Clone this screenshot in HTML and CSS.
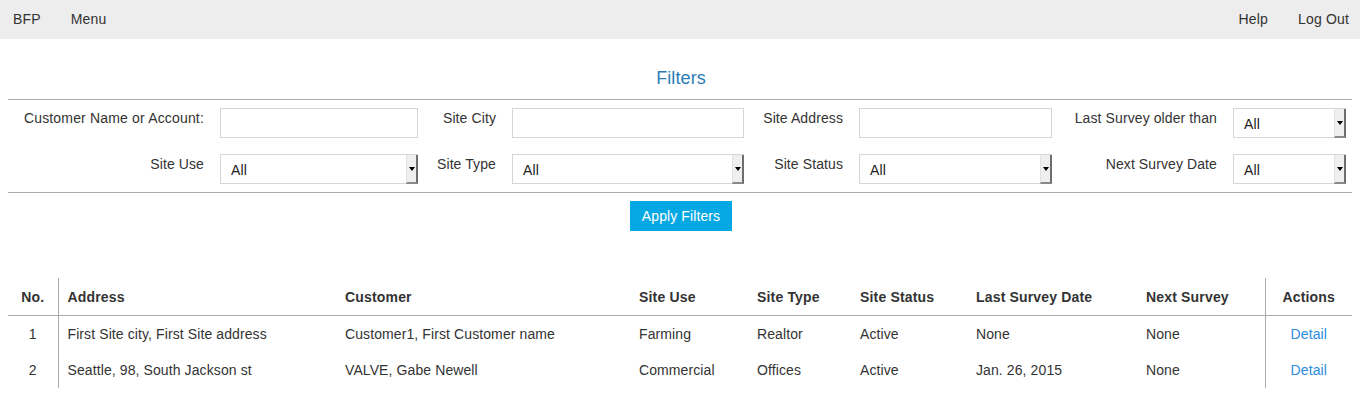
FILE: index.html
```html
<!DOCTYPE html>
<html>
<head>
<meta charset="utf-8">
<title>BFP</title>
<link rel="stylesheet" href="styles.css">
</head>
<body>
<nav class="navbar">
  <div class="nav-group">
    <a class="nav-link" href="#">BFP</a>
    <a class="nav-link" href="#">Menu</a>
  </div>
  <div class="nav-group">
    <a class="nav-link" href="#">Help</a>
    <a class="nav-link" href="#">Log Out</a>
  </div>
</nav>
<main class="content">
  <h2 class="filters-title">Filters</h2>
  <form class="filters">
    <label class="f-label">Customer Name or Account:</label>
    <input class="f-input" type="text">
    <label class="f-label">Site City</label>
    <input class="f-input" type="text">
    <label class="f-label">Site Address</label>
    <input class="f-input" type="text">
    <label class="f-label">Last Survey older than</label>
    <div class="f-select"><select><option>All</option></select><span class="arrow"></span></div>

    <label class="f-label">Site Use</label>
    <div class="f-select"><select><option>All</option></select><span class="arrow"></span></div>
    <label class="f-label">Site Type</label>
    <div class="f-select"><select><option>All</option></select><span class="arrow"></span></div>
    <label class="f-label">Site Status</label>
    <div class="f-select"><select><option>All</option></select><span class="arrow"></span></div>
    <label class="f-label">Next Survey Date</label>
    <div class="f-select"><select><option>All</option></select><span class="arrow"></span></div>
  </form>
  <div class="apply-row"><button class="apply-btn" type="button">Apply Filters</button></div>

  <table class="sites">
    <colgroup>
      <col class="c-no"><col class="c-addr"><col class="c-cust"><col class="c-use"><col class="c-type"><col class="c-status"><col class="c-last"><col class="c-next"><col class="c-act">
    </colgroup>
    <thead>
      <tr>
        <th class="no">No.</th>
        <th>Address</th>
        <th>Customer</th>
        <th>Site Use</th>
        <th>Site Type</th>
        <th>Site Status</th>
        <th>Last Survey Date</th>
        <th>Next Survey</th>
        <th class="act">Actions</th>
      </tr>
    </thead>
    <tbody>
      <tr>
        <td class="no">1</td>
        <td>First Site city, First Site address</td>
        <td>Customer1, First Customer name</td>
        <td>Farming</td>
        <td>Realtor</td>
        <td>Active</td>
        <td>None</td>
        <td>None</td>
        <td class="act"><a href="#">Detail</a></td>
      </tr>
      <tr>
        <td class="no">2</td>
        <td>Seattle, 98, South Jackson st</td>
        <td>VALVE, Gabe Newell</td>
        <td>Commercial</td>
        <td>Offices</td>
        <td>Active</td>
        <td>Jan. 26, 2015</td>
        <td>None</td>
        <td class="act"><a href="#">Detail</a></td>
      </tr>
    </tbody>
  </table>
</main>
</body>
</html>
```

FILE: styles.css
```css
* { box-sizing: border-box; }

body {
  margin: 0;
  font-family: "Liberation Sans", Arial, sans-serif;
  font-size: 14px;
  line-height: 20px;
  letter-spacing: 0.1px;
  color: #333;
  background: #fff;
}

.navbar {
  height: 39px;
  background: #ededed;
  display: flex;
  justify-content: space-between;
  align-items: center;
  padding: 0 11px 2px 13px;
}

.nav-group {
  display: flex;
  gap: 30px;
}

.nav-link {
  color: #333;
  text-decoration: none;
  font-size: 14px;
  line-height: 18px;
  letter-spacing: 0.17px;
}

.content {
  padding: 0 8px;
}

.filters-title {
  margin: 29px 0 11px;
  font-size: 18px;
  line-height: 20px;
  font-weight: normal;
  text-align: center;
  color: #2b7cb5;
  padding-left: 2px;
}

.filters {
  border-top: 1px solid #aaa;
  border-bottom: 1px solid #aaa;
  padding: 8px 0 8px;
  display: grid;
  grid-template-columns: 212px 198px 94px 232px 115px 193px 181px 113px;
  row-gap: 16px;
}

.f-label {
  text-align: right;
  padding-right: 16px;
  line-height: 20px;
}

.f-label:first-child {
  letter-spacing: 0.17px;
}

.f-input {
  height: 30px;
  border: 1px solid #d6d6d6;
  background: #fff;
  font: inherit;
  padding: 0 10px;
}

.f-select {
  position: relative;
  height: 30px;
}

.f-select select {
  appearance: none;
  -webkit-appearance: none;
  width: 100%;
  height: 30px;
  border: 1px solid #d6d6d6;
  border-radius: 0;
  background: #fff;
  font: inherit;
  letter-spacing: inherit;
  color: #222;
  padding: 1px 10px 0;
}

.f-select .arrow {
  position: absolute;
  top: 1px;
  right: 0;
  bottom: 0;
  width: 12px;
  background: #efefef;
  border-left: 1px solid #e2e2e2;
  border-right: 2px solid #6e6e6e;
  border-bottom: 2px solid #8a8a8a;
  display: flex;
  align-items: center;
  justify-content: center;
  pointer-events: none;
}

.f-select .arrow::after {
  content: "";
  border-top: 4px solid #000;
  border-left: 3px solid transparent;
  border-right: 3px solid transparent;
  margin-top: 1px;
}

.apply-row {
  display: flex;
  justify-content: center;
  margin-top: 8px;
  padding-left: 2px;
}

.apply-btn {
  width: 102px;
  height: 30px;
  border: none;
  background: #05a8e2;
  color: #fff;
  font: inherit;
  letter-spacing: inherit;
  padding: 0;
}

.sites {
  margin-top: 47px;
  width: 100%;
  border-collapse: collapse;
  table-layout: fixed;
}

.c-no { width: 50px; }
.c-addr { width: 278px; }
.c-cust { width: 294px; }
.c-use { width: 118px; }
.c-type { width: 103px; }
.c-status { width: 116px; }
.c-last { width: 170px; }
.c-next { width: 128px; }
.c-act { width: 87px; }

.sites th {
  text-align: left;
  font-weight: bold;
  padding: 9px 9px 8px;
  border-bottom: 1px solid #aaa;
  white-space: nowrap;
  letter-spacing: 0.17px;
}

.sites td {
  padding: 8px 9px;
  white-space: nowrap;
}

.sites .no {
  text-align: center;
  border-right: 1px solid #aaa;
}

.sites .act {
  text-align: center;
  border-left: 1px solid #aaa;
}

.sites a {
  color: #2a8be0;
  text-decoration: none;
}
```
